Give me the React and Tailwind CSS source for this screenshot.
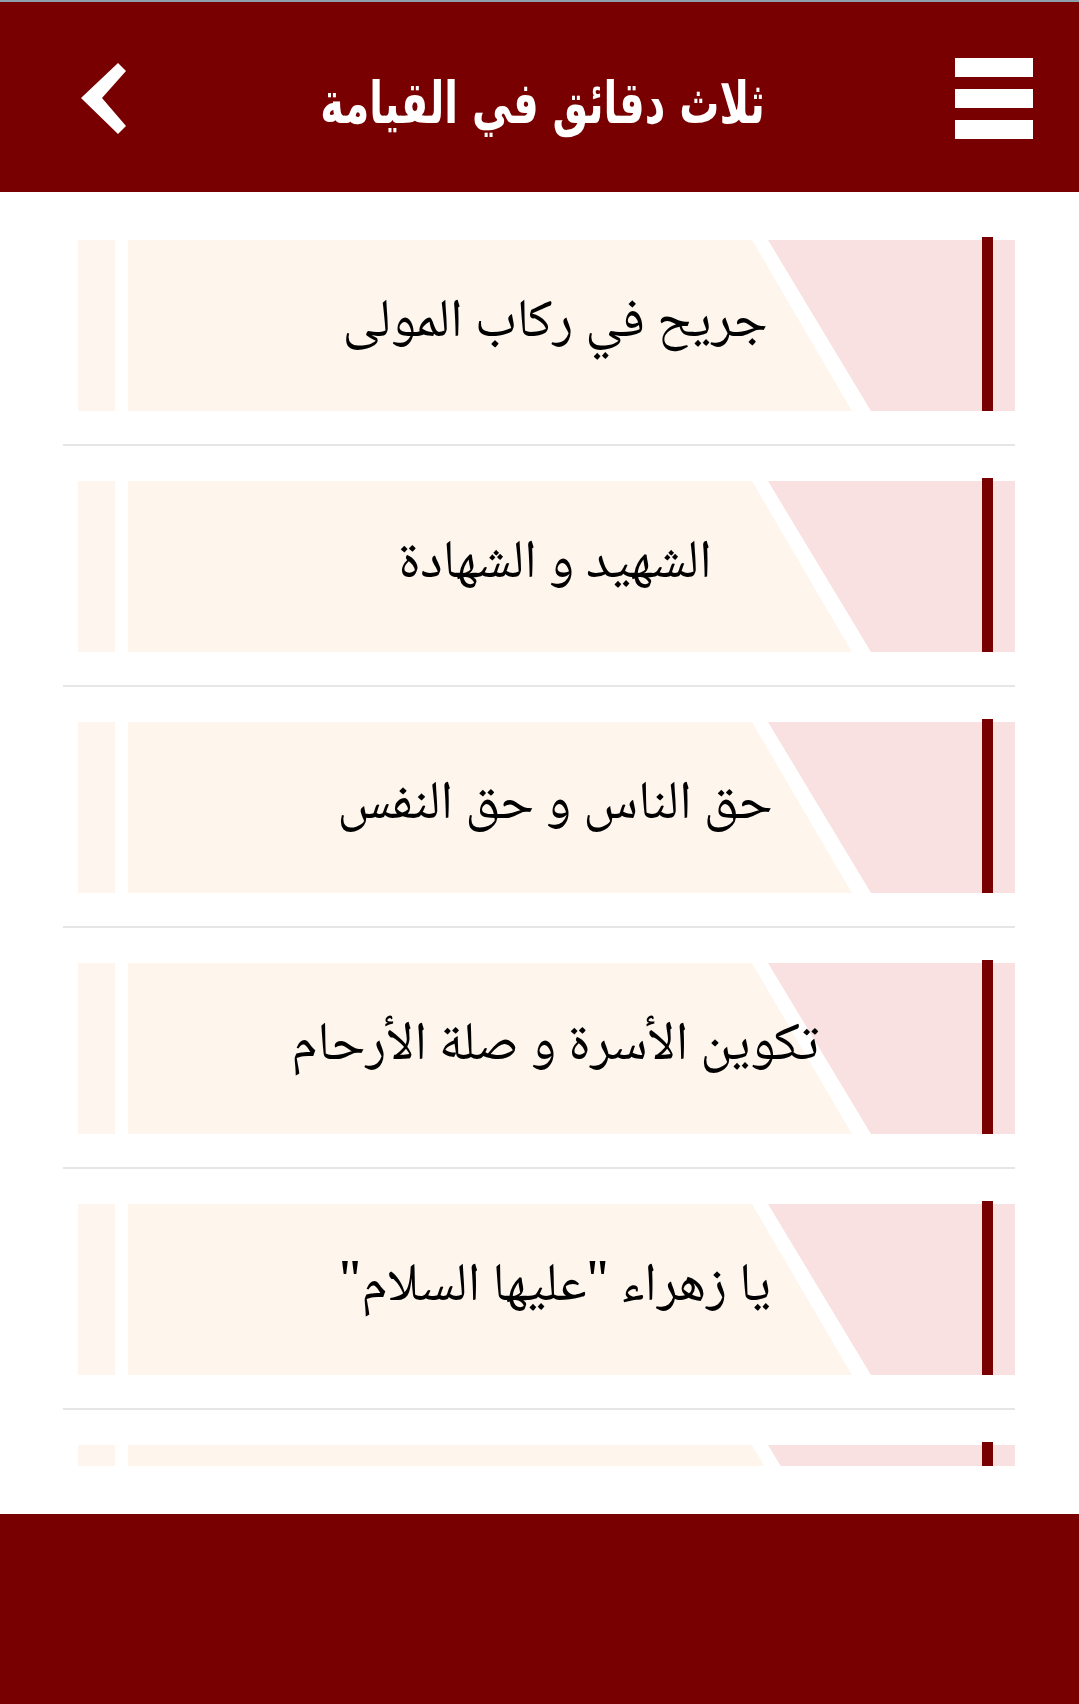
const lectures = [
  "جريح في ركاب المولى",
  "الشهيد و الشهادة",
  "حق الناس و حق النفس",
  "تكوين الأسرة و صلة الأرحام",
  'يا زهراء "عليها السلام"',
  "",
];

const BackIcon = () => (
  <svg width="52" height="78" viewBox="0 0 52 78" className="block">
    <polygon points="40,3 48,11 24,38 48,66 40,74 3,38" fill="#fff" />
  </svg>
);

const MenuIcon = () => (
  <div className="flex w-[78px] flex-col gap-[12px]">
    <span className="block h-[19px] bg-white" />
    <span className="block h-[19px] bg-white" />
    <span className="block h-[19px] bg-white" />
  </div>
);

const LectureItem = ({ title }) => (
  <div className="ml-[15px] flex h-[171px]">
    <div className="w-[37px] bg-[#fef6ee]" />
    <div className="ml-[13px] relative flex-1">
      {/* cream panel, white slash, pink tail */}
      <div className="absolute inset-0 bg-[#fef5ed] [clip-path:polygon(0_0,624px_0,724px_100%,0_100%)]" />
      <div className="absolute inset-0 bg-[#f9e1e1] [clip-path:polygon(640px_0,100%_0,100%_100%,743px_100%)]" />
      <div className="absolute right-[22px] top-[-3px] bottom-0 w-[11px] bg-[#780000]" />
      <div
        dir="rtl"
        className="relative flex h-full items-center justify-center pr-[33px] pb-[4px] text-[54px] leading-none text-black"
        style={{ fontFamily: '"Noto Naskh Arabic", "DejaVu Sans", sans-serif' }}
      >
        {title}
      </div>
    </div>
  </div>
);

export default function App() {
  return (
    <div className="flex h-[1704px] w-[1079px] flex-col overflow-hidden bg-white">
      <header className="flex h-[192px] shrink-0 items-center border-t-2 border-[#8fa0ad] bg-[#780000] pl-[78px] pr-[46px]">
        <button className="mt-[4px]">
          <BackIcon />
        </button>
        <h1
          dir="rtl"
          className="flex-1 pt-[8px] text-center text-[40px] font-bold leading-none text-white scale-y-[1.45]"
          style={{ fontFamily: '"DejaVu Sans", sans-serif' }}
        >
          ثلاث دقائق في القيامة
        </h1>
        <button className="mt-[3px]">
          <MenuIcon />
        </button>
      </header>

      <main className="min-h-0 flex-1 pb-[48px]">
        <div className="h-full overflow-hidden pl-[63px] pr-[64px] pt-[48px]">
          {lectures.map((title, i) => (
            <div key={i}>
              <LectureItem title={title} />
              <div className="mt-[33px] mb-[35px] h-[2px] bg-[#e6e6e6]" />
            </div>
          ))}
        </div>
      </main>

      <footer className="h-[190px] shrink-0 bg-[#780000]" />
    </div>
  );
}
